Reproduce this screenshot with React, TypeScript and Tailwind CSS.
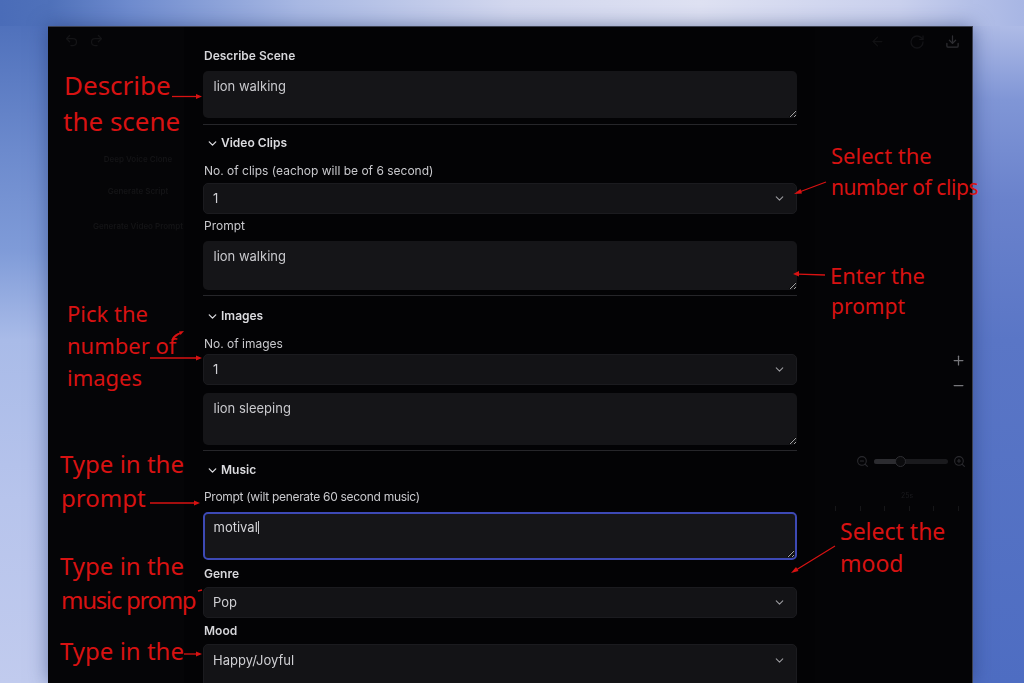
import React from 'react';
import { ChevronDown, Download, Minus, Plus, Redo2, RotateCw, Undo2, ArrowLeft, ZoomIn, ZoomOut } from 'lucide-react';

const Label: React.FC<{ text: string; className?: string }> = ({ text, className }) => (
  <div className={`flex h-5 items-center pl-px pt-[2px] text-[12px] leading-5 text-[#c9c9cd] ${className ?? ''}`}>{text}</div>
);

const Strong: React.FC<{ text: string; className?: string }> = ({ text, className }) => (
  <div className={`flex h-5 items-center pl-px pt-[2px] text-[12px] leading-5 font-semibold text-[#d6d6da] ${className ?? ''}`}>{text}</div>
);

const Section: React.FC<{ text: string; className?: string }> = ({ text, className }) => (
  <div className={`flex h-5 items-center gap-[2px] pl-[3px] pt-[2px] text-[12px] font-semibold text-[#dcdce0] ${className ?? ''}`}>
    <ChevronDown size={13} strokeWidth={2.4} />
    <span>{text}</span>
  </div>
);

const Area: React.FC<{ value: string; focused?: boolean; className?: string }> = ({ value, focused, className }) => (
  <textarea
    readOnly
    defaultValue={value}
    className={`block w-full resize-y scheme-dark rounded-[5px] bg-[#151518] text-[13px] leading-[16px] outline-none ${
      focused
        ? 'border-2 border-[#3d49b5] px-[8.5px] py-[5px] text-[#d4d4d8]'
        : 'px-[10.5px] py-[7px] text-[#c9c9cd]'
    } ${className ?? ''}`}
  />
);

const Picker: React.FC<{ value: string; className?: string }> = ({ value, className }) => (
  <div className={`flex h-[31px] items-center justify-between rounded-[5px] border border-[#1b1b1f] bg-[#131316] pl-[9px] pr-[10px] text-[13px] text-[#cfcfd3] ${className ?? ''}`}>
    <span>{value}</span>
    <ChevronDown size={13} className="text-[#9a9a9e]" />
  </div>
);

const Divider: React.FC<{ className?: string }> = ({ className }) => (
  <div className={`h-px bg-[#26262a] ${className ?? ''}`} />
);

const Note: React.FC<{ text: string; x: string }> = ({ text, x }) => (
  <div className={`absolute whitespace-nowrap font-['Noto_Sans',sans-serif] text-[#d81212] ${x}`}>{text}</div>
);

export default function App() {
  return (
    <div className="relative h-[683px] w-[1024px] overflow-hidden bg-[#5571c2] [background:linear-gradient(90deg,#4a6cb8_0px,#4f71ba_48px,#6f8ccf_130px,#a9b9e4_300px,#d3d8ef_512px,#dfe2f3_700px,#cad1ee_900px,#b4c0e8_973px,#a8b6e4_1024px)_0_0/100%_26px_no-repeat,linear-gradient(180deg,#4a6cb8_0px,#6c8acd_150px,#7f9bd8_250px,#a9bbe8_340px,#b7c4ec_500px,#c1cbee_683px)_0_0/48px_100%_no-repeat,linear-gradient(180deg,#aebbe6_26px,#8096d6_100px,#6a82cc_200px,#5a76c6_340px,#4e6dc2_683px)_100%_0/51px_100%_no-repeat] pl-[48px] pt-[26px] font-['Inter',sans-serif]">
      <div className="flex h-[657px] w-[925px] overflow-hidden border-r border-t border-[#3c4050] bg-[#040406] shadow-[0_0_18px_rgba(30,50,110,0.5)]">
        {/* sidebar behind the modal */}
        <div className="flex w-[136px] shrink-0 flex-col bg-[#050507] text-[#141416]">
          <div className="flex gap-[10px] pl-[16px] pt-[6px]">
            <Undo2 size={15} />
            <Redo2 size={15} />
          </div>
          <div className="mt-[105px] flex flex-col items-center gap-[16px] pl-[44px] text-[8px] font-semibold blur-[0.6px]">
            <span className="h-4 whitespace-nowrap">Deep Voice Clone</span>
            <span className="h-4 whitespace-nowrap">Generate Script</span>
            <span className="mt-[3px] h-4 whitespace-nowrap">Generate Video Prompt</span>
          </div>
        </div>

        {/* form */}
        <div className="w-[631px] shrink-0 bg-[#030305] pl-[19px] pr-[18px] pt-[18px] blur-[0.45px]">
          <Strong text="Describe Scene" />
          <Area value="lion walking" className="mt-[6px] h-[47px]" />
          <Divider className="mt-[6px]" />
          <Section text="Video Clips" className="mt-[7px]" />
          <Label text="No. of clips (eachop will be of 6 second)" className="mt-[8px]" />
          <Picker value="1" className="mt-[3px]" />
          <Label text="Prompt" className="mt-px" />
          <Area value="lion walking" className="mt-[6px] h-[49px]" />
          <Divider className="mt-[5px]" />
          <Section text="Images" className="mt-[9px]" />
          <Label text="No. of images" className="mt-[8px]" />
          <Picker value="1" className="mt-px" />
          <Area value="lion sleeping" className="mt-[8px] h-[52px]" />
          <Divider className="mt-[5px]" />
          <Section text="Music" className="mt-[8px]" />
          <Label text="Prompt (wilt penerate 60 second music)" className="mt-[7px] tracking-[-0.3px]" />
          <div className="relative mt-[6px]">
            <Area value="motival" focused className="h-[48px]" />
            <span className="absolute left-[55px] top-[9px] h-[13px] w-px bg-[#c9c9cd]" />
          </div>
          <Strong text="Genre" className="mt-[3px]" />
          <Picker value="Pop" className="mt-[4px]" />
          <Strong text="Mood" className="mt-[2px]" />
          <div className="mt-[4px] flex h-[44px] items-start justify-between rounded-[5px] border border-[#1b1b1f] bg-[#131316] pl-[9px] pr-[10px] pt-[6px] text-[13px] text-[#cfcfd3]">
            <span>Happy/Joyful</span>
            <ChevronDown size={13} className="mt-[3px] text-[#9a9a9e]" />
          </div>
        </div>

        {/* timeline side */}
        <div className="flex min-w-0 flex-1 flex-col bg-[#040406]">
          <div className="flex justify-end pr-[12px] pt-[7px]">
            <ArrowLeft size={15} className="text-[#111113]" />
            <RotateCw size={16} className="ml-[24px] text-[#131316]" />
            <Download size={15} className="ml-[20px] text-[#2e2e32]" />
          </div>
          <div className="ml-auto mr-[6px] mt-[303px] flex flex-col items-center gap-[10px] text-[#77777b]">
            <Plus size={15} />
            <Minus size={15} />
          </div>
          <div className="mt-[62px] flex items-center gap-[5px] pl-[41px] text-[#2a2a2e]">
            <ZoomOut size={13} />
            <div className="relative h-[5px] w-[74px] rounded-full bg-[#1a1a1d]">
              <div className="h-full w-[27px] rounded-full bg-[#2c2c30]" />
              <div className="absolute left-[21px] top-[-3px] h-[11px] w-[11px] rounded-full border border-[#2e2e32] bg-[#0b0b0d]" />
            </div>
            <ZoomIn size={13} />
          </div>
          <div className="mt-[23px] pl-[27px] text-center text-[7px] text-[#1a1a1d] blur-[0.4px]">25s</div>
          <div className="mt-[4px] flex gap-[23.5px] pl-[20px]">
            {[0, 1, 2, 3, 4, 5].map((i) => (
              <span key={i} className="h-[5px] w-px bg-[#161618]" />
            ))}
          </div>
        </div>
      </div>

      {/* red notes drawn on top of the screenshot */}
      <Note text="Describe" x="left-[64px] top-[66px] text-[26px] leading-[38px]" />
      <Note text="the scene" x="left-[63px] top-[102px] text-[26px] leading-[38px]" />
      <Note text="Select the" x="left-[831px] top-[138px] text-[22px] leading-[34px]" />
      <Note text="number of clips" x="left-[831px] top-[170px] text-[21px] tracking-[-0.45px] leading-[34px]" />
      <Note text="Enter the" x="left-[830px] top-[258px] text-[22px] leading-[34px]" />
      <Note text="prompt" x="left-[831px] top-[289px] text-[21px] leading-[34px]" />
      <Note text="Pick the" x="left-[67px] top-[296px] text-[22px] leading-[34px]" />
      <Note text="number of" x="left-[67px] top-[328px] text-[22px] leading-[34px]" />
      <Note text="images" x="left-[67px] top-[360px] text-[22px] leading-[34px]" />
      <Note text="Type in the" x="left-[60px] top-[445px] text-[24px] leading-[38px]" />
      <Note text="prompt" x="left-[61px] top-[479px] text-[24px] leading-[38px]" />
      <Note text="Type in the" x="left-[60px] top-[547px] text-[24px] leading-[38px]" />
      <Note text="music promp" x="left-[61px] top-[581px] text-[24px] tracking-[-1.3px] leading-[38px]" />
      <Note text="Type in the" x="left-[60px] top-[632px] text-[24px] leading-[38px]" />
      <Note text="Select the" x="left-[840px] top-[514px] text-[23px] leading-[34px]" />
      <Note text="mood" x="left-[840px] top-[546px] text-[23px] leading-[34px]" />

      <svg className="pointer-events-none absolute left-0 top-0" width="1024" height="683" fill="#d81212" stroke="#d81212" strokeWidth="1.3">
        <path d="M172 96.5H197" /><path d="M202 96.5l-6-2.5v5z" stroke="none" />
        <path d="M826 182l-28 10.5" /><path d="M794 194l6.5-5 1.5 4.5z" stroke="none" />
        <path d="M825 275l-27-.8" /><path d="M793 274l6-3v5.500z" stroke="none" />
        <path d="M172 340c2-5 5-6 9-7" /><path d="M184 331l-5 .5 1.500 3.500z" stroke="none" />
        <path d="M150 358H197" /><path d="M202 358l-6-2.500v5z" stroke="none" />
        <path d="M150 503H195" /><path d="M200 503l-6-2.500v5z" stroke="none" />
        <path d="M198 591l4-1" />
        <path d="M184 654H197" /><path d="M202 654l-6-2.500v5z" stroke="none" />
        <path d="M835 546l-39 24" /><path d="M791 573l5-6 2.500 4z" stroke="none" />
      </svg>
    </div>
  );
}
